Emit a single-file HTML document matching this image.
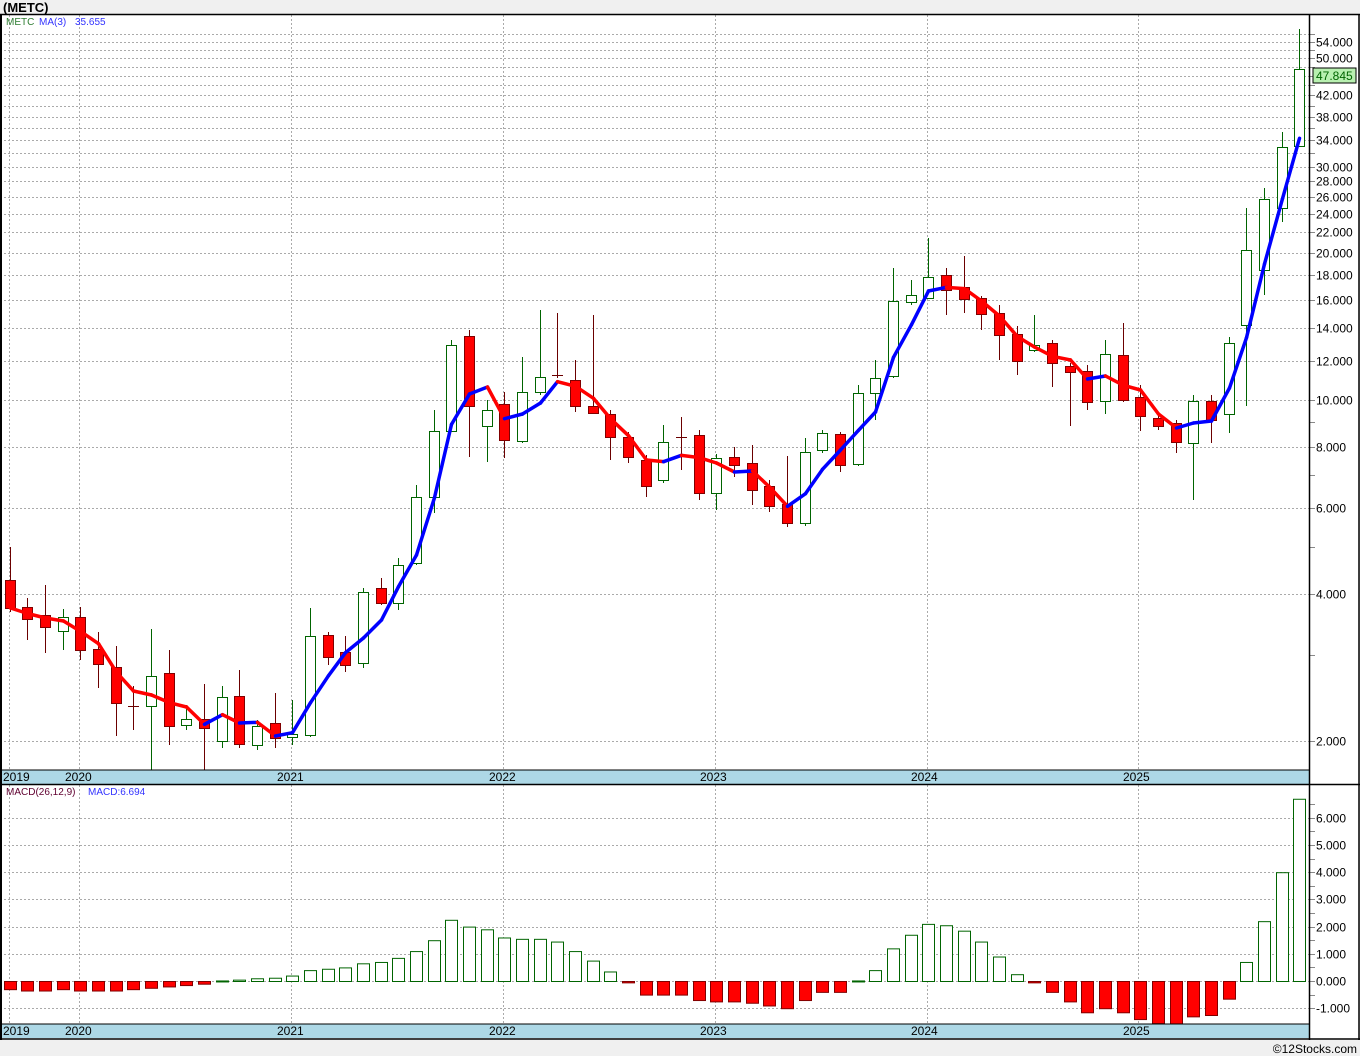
<!DOCTYPE html>
<html><head><meta charset="utf-8"><style>
html,body{margin:0;padding:0;background:#f0f0f0;width:1360px;height:1056px;overflow:hidden}
svg{display:block;font-family:"Liberation Sans",sans-serif}
</style></head><body>
<svg id="s" width="1360" height="1056" xmlns="http://www.w3.org/2000/svg">
<rect x="0" y="0" width="1360" height="1056" fill="#f0f0f0"/>
<text x="3" y="12" font-size="13" font-weight="bold" fill="#000">(METC)</text>
<rect x="0" y="14" width="1359" height="1026" fill="#fff"/>
<g id="g"></g>
<rect x="0" y="770" width="1309" height="14" fill="#add8e6"/>
<rect x="0" y="1024" width="1309" height="14" fill="#add8e6"/>
<line x1="0" y1="770" x2="1309" y2="770" stroke="#000"/>
<line x1="0" y1="784.5" x2="1360" y2="784.5" stroke="#000" stroke-width="1.5"/>
<line x1="0" y1="1024" x2="1309" y2="1024" stroke="#000"/>
<line x1="0" y1="1039" x2="1360" y2="1039" stroke="#000" stroke-width="1.5"/>
<line x1="0" y1="14.5" x2="1360" y2="14.5" stroke="#000" stroke-width="1.5"/>
<line x1="1" y1="14" x2="1" y2="1040" stroke="#000" stroke-width="2"/>
<line x1="1309.5" y1="14" x2="1309.5" y2="1040" stroke="#000" stroke-width="1.5"/>
<line x1="1359" y1="14" x2="1359" y2="1040" stroke="#000" stroke-width="1.5"/>
<g font-size="12" fill="#000">
<text x="3" y="781">2019</text><text x="65" y="781">2020</text><text x="277" y="781">2021</text><text x="489" y="781">2022</text><text x="700" y="781">2023</text><text x="911" y="781">2024</text><text x="1123" y="781">2025</text>
<text x="3" y="1035">2019</text><text x="65" y="1035">2020</text><text x="277" y="1035">2021</text><text x="489" y="1035">2022</text><text x="700" y="1035">2023</text><text x="911" y="1035">2024</text><text x="1123" y="1035">2025</text>
</g>
<text x="6" y="25" font-size="10" fill="#2e7d32">METC</text>
<text x="39" y="25" font-size="10" fill="#3333ff">MA(3)</text>
<text x="75" y="25" font-size="10" fill="#3333ff">35.655</text>
<text x="6" y="795" font-size="10" fill="#600030">MACD(26,12,9)</text>
<text x="88" y="795" font-size="10" fill="#3333ff">MACD:6.694</text>
<rect x="1313" y="68" width="43" height="15" fill="#b8f0b0" stroke="#000"/>
<text x="1316" y="80" font-size="12" fill="#006400">47.845</text>
<text x="1357" y="1053" font-size="12" fill="#000" text-anchor="end">©12Stocks.com</text>
</svg>
<script>
var NS="http://www.w3.org/2000/svg",g=document.getElementById('g');
function el(t,a,txt){var e=document.createElementNS(NS,t);for(var k in a)e.setAttribute(k,a[k]);if(txt)e.textContent=txt;g.appendChild(e);return e;}
function py(p){return 741-147*Math.log2(p/2);}
// grid
var yx=[9,79,291,503,715,927,1138];
yx.forEach(function(x){el('line',{x1:x+.5,y1:15,x2:x+.5,y2:770,stroke:'#aaa','stroke-dasharray':'2,2'});el('line',{x1:x+.5,y1:785,x2:x+.5,y2:1024,stroke:'#aaa','stroke-dasharray':'2,2'});});
var lv=[2,4,6,8];for(var p=10;p<=56;p+=2)lv.push(p);
var lab={2:1,4:1,6:1,8:1,10:1,12:1,14:1,16:1,18:1,20:1,22:1,24:1,26:1,28:1,30:1,34:1,38:1,42:1,50:1,54:1};
lv.forEach(function(p){var y=Math.round(py(p))+.5;if(y<16)return;el('line',{x1:0,y1:y,x2:1309,y2:y,stroke:'#aaa','stroke-dasharray':'2,2'});el('line',{x1:1309,y1:y,x2:1315,y2:y,stroke:'#888'});if(lab[p])el('text',{x:1316,y:y+4,'font-size':12,fill:'#000'},p.toFixed(3));});
[3,5,7,9].forEach(function(p){var y=Math.round(py(p))+.5;el('line',{x1:1309,y1:y,x2:1315,y2:y,stroke:'#888'});});
for(var v=-1;v<=6;v++){var y=Math.round(981-27.2*v)+.5;el('line',{x1:0,y1:y,x2:1309,y2:y,stroke:'#aaa','stroke-dasharray':'2,2'});el('line',{x1:1309,y1:y,x2:1315,y2:y,stroke:'#888'});el('text',{x:1316,y:y+4,'font-size':12,fill:'#000'},(v<0?'-':'')+Math.abs(v).toFixed(3));var y2=Math.round(981-27.2*(v+.5))+.5;if(y2>790)el('line',{x1:1309,y1:y2,x2:1315,y2:y2,stroke:'#888'});}
// candles [o,c,h,l]
var C=[[580,608,547,612],[607,619,598,640],[615,627,585,653],[631,617,609,650],[617,650,607,660],[649,664,632,688],[667,703,646,736],[706,706,686,730],[706,676,629,770],[673,726,650,745],[725,719,705,730],[719,728,684,770],[741,697,686,748],[696,744,670,748],[745,726,720,750],[723,738,693,748],[737,734,700,745],[735,636,608,737],[635,657,632,665],[652,665,636,672],[663,592,588,668],[588,603,578,605],[603,565,558,610],[563,497,485,565],[497,431,410,513],[431,345,340,432],[336,406,330,457],[426,410,400,462],[404,440,392,458],[441,392,357,443],[392,377,310,395],[375,376,313,378],[380,406,360,412],[406,413,315,413],[414,437,410,460],[437,457,432,463],[460,486,455,497],[480,442,425,483],[437,438,417,470],[435,493,430,500],[493,458,454,510],[457,465,447,477],[463,490,445,505],[486,506,480,512],[504,523,456,527],[523,452,438,526],[450,433,430,453],[434,465,432,472],[464,393,385,466],[393,378,360,420],[376,301,268,378],[302,295,280,305],[298,277,238,298],[275,290,268,315],[287,299,256,313],[298,314,296,330],[313,335,305,360],[334,361,326,375],[350,345,315,352],[343,363,340,387],[366,372,363,426],[371,402,365,410],[401,354,340,414],[355,400,323,402],[397,416,385,431],[418,426,415,430],[423,442,420,453],[443,401,395,500],[401,420,395,443],[414,343,337,433],[325,250,208,406],[270,199,188,295],[208,147,132,222],[146,69,29,145]];
var M=[-0.3,-0.35,-0.35,-0.3,-0.35,-0.35,-0.35,-0.3,-0.25,-0.2,-0.15,-0.1,0.02,0.05,0.1,0.12,0.2,0.4,0.45,0.5,0.65,0.7,0.85,1.1,1.5,2.25,2.0,1.9,1.6,1.55,1.55,1.45,1.1,0.75,0.35,-0.05,-0.5,-0.5,-0.5,-0.7,-0.75,-0.75,-0.8,-0.9,-1.0,-0.7,-0.4,-0.4,0.02,0.4,1.2,1.7,2.1,2.05,1.85,1.45,0.9,0.25,-0.05,-0.4,-0.75,-1.15,-1.0,-1.15,-1.4,-1.55,-1.6,-1.3,-1.25,-0.65,0.7,2.2,4.0,6.7];
function X(i){return Math.round(9.5+i*17.67);}
C.forEach(function(c,i){var x=X(i),up=c[1]<c[0],col=up?'#006400':'#6b0000';
el('line',{x1:x+.5,y1:c[2],x2:x+.5,y2:c[3],stroke:col});
var t=Math.min(c[0],c[1]),h=Math.max(Math.abs(c[0]-c[1]),1);
if(h<=1)el('line',{x1:x-5,y1:t+.5,x2:x+6,y2:t+.5,stroke:col});
else el('rect',{x:x-5+.5,y:t+.5,width:10,height:h,fill:up?'#fff':'#ff0000',stroke:up?'#006400':'#800000'});});
// MA
var ma=[];for(var i=0;i<C.length;i++){var a=C.slice(Math.max(0,i-2),i+1);ma.push(a.reduce(function(s,c){return s+c[1];},0)/a.length);}
for(var i=1;i<ma.length;i++){el('line',{x1:X(i-1)+.5,y1:ma[i-1],x2:X(i)+.5,y2:ma[i],stroke:ma[i]<ma[i-1]?'#0000ff':'#ff0000','stroke-width':3.5,'stroke-linecap':'round'});}
// MACD
M.forEach(function(v,i){var x=X(i),y0=981,y1=981-27.2*v,t=Math.min(y0,y1),h=Math.max(Math.abs(y1-y0),1);
el('rect',{x:x-6+.5,y:t+.5,width:12,height:h,fill:v>0?'#fff':'#ff0000',stroke:v>0?'#006400':'#800000'});});
</script>
</body></html>
